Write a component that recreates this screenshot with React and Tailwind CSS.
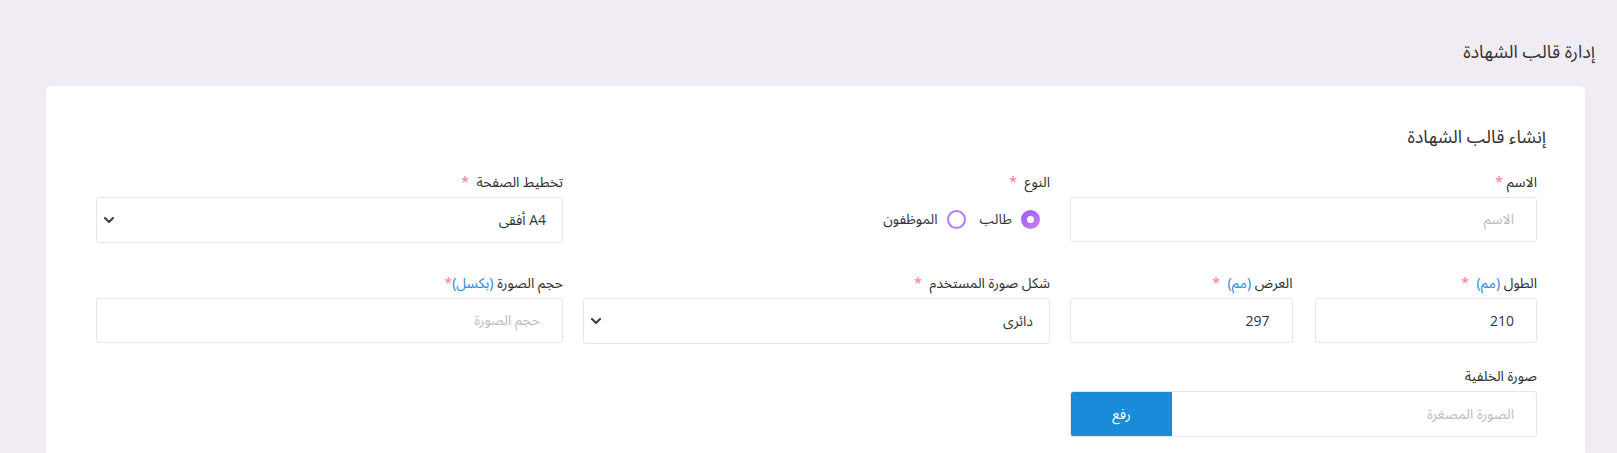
import React from 'react';

const font = "font-['Noto_Sans_Arabic','DejaVu_Sans',sans-serif]";

function Req({ tight }) {
  return <span className={`text-[#ff7a95] ${tight ? '' : 'mr-1'}`}>*</span>;
}

function Label({ children }) {
  return (
    <div className="h-[20px] leading-[20px] text-[14px] text-[#2f2f2f] mb-[4px] whitespace-nowrap">
      {children}
    </div>
  );
}

function TextInput({ placeholder, value }) {
  return (
    <div className="h-[45px] border border-[#e6e6ee] rounded-[3px] bg-white flex items-center pr-[22px] text-[14px]">
      {value ? (
        <span className="text-[#333] font-['Open_Sans',sans-serif]">{value}</span>
      ) : (
        <span className="text-[#bdbdbd]">{placeholder}</span>
      )}
    </div>
  );
}

function Chevron() {
  return (
    <svg width="12" height="8" viewBox="0 0 12 8" fill="none">
      <path d="M2 2l4 4 4-4" stroke="#444" strokeWidth="2.2" strokeLinecap="round" strokeLinejoin="round" />
    </svg>
  );
}

function Select({ children }) {
  return (
    <div className="h-[46px] border border-[#e6e6ee] rounded-[3px] bg-white flex items-center justify-between pr-[16px] pl-[6px] text-[14px] text-[#333]">
      <span>{children}</span>
      <Chevron />
    </div>
  );
}

function Radio({ checked, label }) {
  return (
    <div className="flex items-center gap-[9px]">
      {checked ? (
        <span className="w-[19px] h-[19px] rounded-full bg-gradient-to-br from-[#9a5cf0] to-[#cf7ff8] flex items-center justify-center">
          <span className="w-[7px] h-[7px] rounded-full bg-white" />
        </span>
      ) : (
        <span className="w-[19px] h-[19px] rounded-full border-2 border-[#b57af5] bg-white" />
      )}
      <span className="text-[14px] text-[#333]">{label}</span>
    </div>
  );
}

export default function App() {
  return (
    <div dir="rtl" className={`min-h-screen bg-[#f1ecf3] ${font} pt-[39px]`}>
      <h1 className="pr-[22px] text-[18px] leading-[26px] text-[#333] h-[26px]">إدارة قالب الشهادة</h1>

      <div className="mt-[21px] mr-[32px] ml-[46px] bg-white rounded-[5px] pt-[38px] pb-[20px]">
        <h2 className="pr-[39px] text-[18px] leading-[26px] text-[#333]">إنشاء قالب الشهادة</h2>

        <div className="pr-[48px] pl-[50px] mt-[23px]">
          {/* row 1 */}
          <div className="grid grid-cols-3 gap-x-[20px]">
            <div>
              <Label>الاسم <Req tight /></Label>
              <TextInput placeholder="الاسم" />
            </div>
            <div>
              <Label>النوع <Req /></Label>
              <div className="h-[45px] flex items-center gap-[14px] pr-[10px]">
                <Radio checked label="طالب" />
                <Radio label="الموظفون" />
              </div>
            </div>
            <div>
              <Label>تخطيط الصفحة <Req /></Label>
              <Select>
                <span className="font-['Open_Sans',sans-serif]">A4</span> أفقى
              </Select>
            </div>
          </div>

          {/* row 2 */}
          <div className="grid grid-cols-3 gap-x-[20px] mt-[31px]">
            <div className="grid grid-cols-2 gap-x-[22px]">
              <div>
                <Label>الطول <span className="text-[#2d8be0]">(مم)</span> <Req /></Label>
                <TextInput value="210" />
              </div>
              <div>
                <Label>العرض <span className="text-[#2d8be0]">(مم)</span> <Req /></Label>
                <TextInput value="297" />
              </div>
            </div>
            <div>
              <Label>شكل صورة المستخدم <Req /></Label>
              <Select>دائرى</Select>
            </div>
            <div>
              <Label>حجم الصورة <span className="text-[#2d8be0]">(بكسل)</span><Req tight /></Label>
              <TextInput placeholder="حجم الصورة" />
            </div>
          </div>

          {/* row 3 */}
          <div className="grid grid-cols-3 gap-x-[20px] mt-[23px]">
            <div>
              <Label>صورة الخلفية</Label>
              <div className="h-[46px] border border-[#e6e6ee] rounded-[3px] flex overflow-hidden">
                <div className="flex-1 flex items-center pr-[22px] text-[14px] text-[#bdbdbd]">الصورة المصغرة</div>
                <button className="w-[101px] bg-[#1a8bd8] text-white text-[14px]">رفع</button>
              </div>
            </div>
          </div>
        </div>
      </div>
    </div>
  );
}
